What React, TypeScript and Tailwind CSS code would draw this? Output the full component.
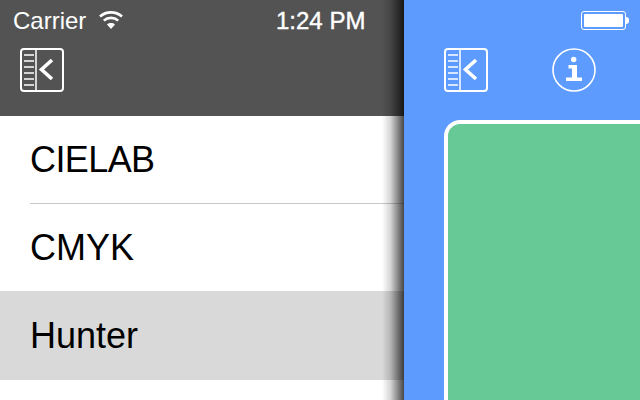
import React from "react";

const rows = [
  { label: "CIELAB", h: "h-[88px]", cls: "bg-white tracking-[-0.6px]" },
  { label: "CMYK", h: "h-[87px]", cls: "bg-white" },
  { label: "Hunter", h: "h-[89px]", cls: "bg-[#d9d9d9]" },
];

const PanelIcon = () => (
  <svg width="44" height="44" viewBox="0 0 44 44" fill="none" stroke="white" className="block">
    <rect x="1" y="1" width="42" height="42" rx="3" strokeWidth="2" />
    <path d="M16 1V43" strokeWidth="1.5" />
    <path d="M4 7H14M4 13H14M4 19H14M4 25H14M4 31H14M4 37H14" strokeWidth="1.5" />
    <path d="M32 12L21.500 21.500L32 31" strokeWidth="3.600" />
  </svg>
);

const InfoIcon = () => (
  <svg width="44" height="44" viewBox="0 0 44 44" fill="none" className="block">
    <circle cx="22" cy="22" r="21" stroke="white" strokeWidth="1.6" />
    <circle cx="21.700" cy="11.500" r="2.700" fill="white" />
    <path d="M16.500 17H25V29.500H30V33H14V29.500H20V20.500H16.500Z" fill="white" />
  </svg>
);

const Wifi = () => (
  <svg width="24" height="18" viewBox="0 0 24 18" fill="none" stroke="white" strokeWidth="2.600" className="block">
    <path d="M1 5.500C7.200 0 16.800 0 23 5.500" />
    <path d="M4.800 9.600C8.800 6 15.200 6 19.200 9.600" />
    <path d="M12 18L8 13.400C10.300 11.500 13.700 11.500 16 13.400Z" fill="white" stroke="none" />
  </svg>
);

export default function App() {
  return (
    <div className="flex h-[400px] w-[640px] overflow-hidden bg-white font-['Liberation_Sans',sans-serif]">
      {/* menu */}
      <div className="w-[404px] shrink-0">
        <div className="h-[116px] bg-[#535353] text-white">
          <div className="flex h-[42px] items-center pl-[13px] text-2xl">
            <span className="w-[86px]">Carrier</span>
            <span className="-mt-0.5 w-[177px]"><Wifi /></span>
            <span className="[-webkit-text-stroke:0.4px_white]">1:24 PM</span>
          </div>
          <div className="pl-5 pt-1.5">
            <PanelIcon />
          </div>
        </div>
        {rows.map((row, i) => (
          <div key={row.label} className={`${row.h} ${row.cls} pl-[30px]`}>
            <div className={`flex h-full items-center text-[36px] text-black ${i === 0 ? "border-b border-[#c8c8c8]" : ""}`}>
              {row.label}
            </div>
          </div>
        ))}
      </div>

      {/* detail */}
      <div className="relative z-10 w-[236px] shrink-0 bg-[#5d9bff] pl-10">
        {/* edge shadow over the menu */}
        <div className="absolute inset-y-0 -left-[22px] w-[22px] bg-[linear-gradient(to_left,rgba(0,0,0,0.72),rgba(0,0,0,0.45)_30%,rgba(0,0,0,0.16)_62%,rgba(0,0,0,0))]" />
        <div className="h-[120px] pt-[11px]">
          <div className="flex justify-end pr-[11px]">
            <div className="flex items-center">
              <div className="h-[19px] w-[45px] rounded-[3px] border border-white p-[2px]">
                <div className="h-full w-full rounded-[1px] bg-white" />
              </div>
              <div className="h-[7px] w-[3px] rounded-r-sm bg-white" />
            </div>
          </div>
          <div className="mt-[18px] flex gap-16">
            <PanelIcon />
            <InfoIcon />
          </div>
        </div>
        <div className="h-[280px] w-[196px] rounded-tl-[16px] border-l-4 border-t-4 border-white bg-[#66c996]" />
      </div>
    </div>
  );
}
